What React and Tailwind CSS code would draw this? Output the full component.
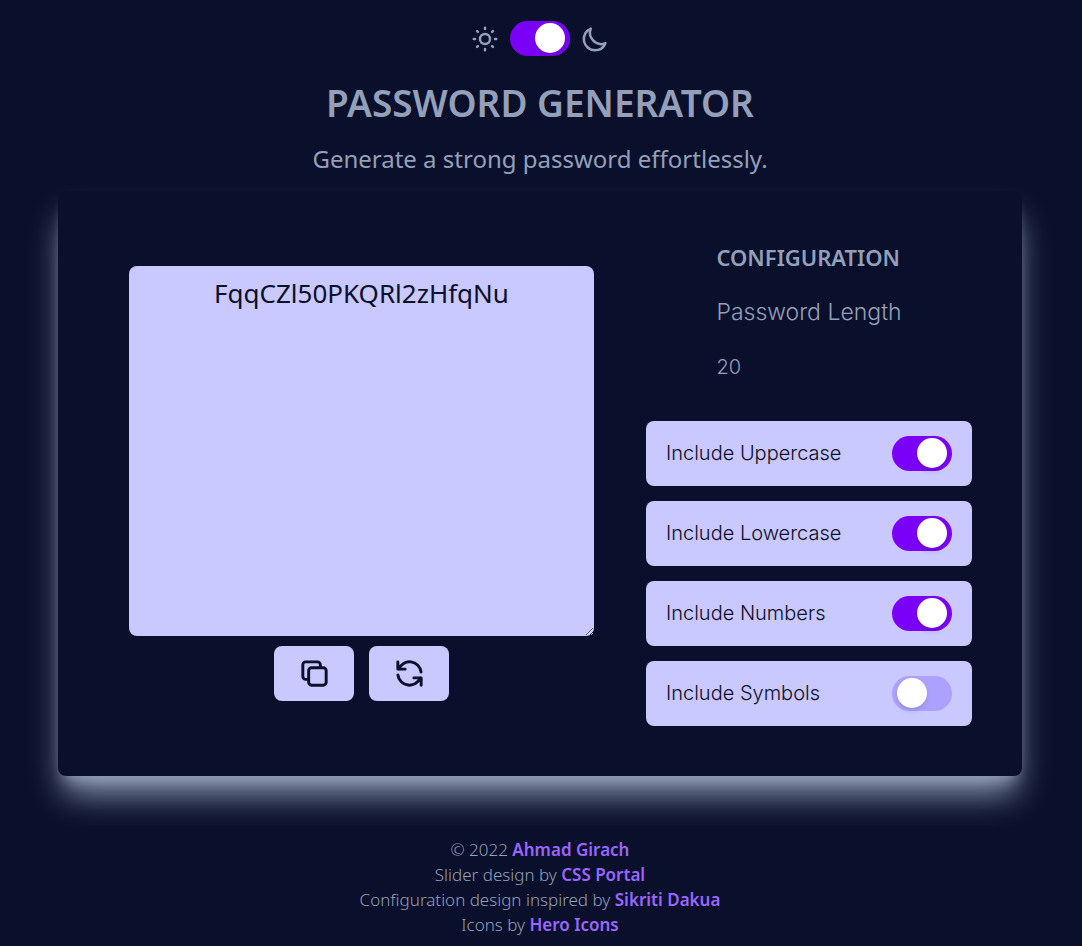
import { useState } from "react";

const SUN =
  "M12 3v1m0 16v1m9-9h-1M4 12H3m15.364 6.364l-.707-.707M6.343 6.343l-.707-.707m12.728 0l-.707.707M6.343 17.657l-.707.707M16 12a4 4 0 11-8 0 4 4 0 018 0z";
const MOON =
  "M20.354 15.354A9 9 0 018.646 3.646 9.003 9.003 0 0012 21a9.003 9.003 0 008.354-5.646z";
const COPY =
  "M8 16H6a2 2 0 01-2-2V6a2 2 0 012-2h8a2 2 0 012 2v2m-6 12h8a2 2 0 002-2v-8a2 2 0 00-2-2h-8a2 2 0 00-2 2v8a2 2 0 002 2z";
const REFRESH =
  "M4 4v5h.582m15.356 2A8.001 8.001 0 004.582 9m0 0H9m11 11v-5h-.581m0 0a8.003 8.003 0 01-15.357-2m15.357 2H15";

function Icon({ path, className, strokeWidth = 2 }) {
  return (
    <svg
      className={className}
      viewBox="0 0 24 24"
      fill="none"
      stroke="currentColor"
      strokeWidth={strokeWidth}
      strokeLinecap="round"
      strokeLinejoin="round"
      aria-hidden="true"
    >
      <path d={path} />
    </svg>
  );
}

function Toggle({ checked, onChange, ...rest }) {
  return (
    <input
      type="checkbox"
      role="switch"
      checked={checked}
      onChange={(e) => onChange(e.target.checked)}
      className="flex h-[35px] w-[60px] shrink-0 cursor-pointer appearance-none items-start rounded-full bg-[#ada1ff] px-[5px] pt-0.5 before:size-[30px] before:rounded-full before:bg-white before:shadow-md before:transition-transform before:content-[''] checked:bg-[#7b00f7] checked:before:translate-x-5"
      {...rest}
    />
  );
}

const OPTIONS = [
  { id: "uppercase", label: "Include Uppercase", on: true },
  { id: "lowercase", label: "Include Lowercase", on: true },
  { id: "numbers", label: "Include Numbers", on: true },
  { id: "symbols", label: "Include Symbols", on: false },
];

const CREDITS = [
  { text: "© 2022", name: "Ahmad Girach" },
  { text: "Slider design by", name: "CSS Portal" },
  { text: "Configuration design inspired by", name: "Sikriti Dakua" },
  { text: "Icons by", name: "Hero Icons" },
];

export default function App() {
  const [dark, setDark] = useState(true);
  const [password, setPassword] = useState("FqqCZl50PKQRl2zHfqNu");
  const [options, setOptions] = useState(
    Object.fromEntries(OPTIONS.map((o) => [o.id, o.on]))
  );

  const regenerate = () => {
    const pool =
      (options.uppercase ? "ABCDEFGHIJKLMNOPQRSTUVWXYZ" : "") +
      (options.lowercase ? "abcdefghijklmnopqrstuvwxyz" : "") +
      (options.numbers ? "0123456789" : "") +
      (options.symbols ? "!@#$%^&*()-_=+" : "");
    if (!pool) return;
    setPassword(
      Array.from({ length: 20 }, () => pool[Math.floor(Math.random() * pool.length)]).join("")
    );
  };

  return (
    <div className="flex min-h-screen flex-col items-center bg-[#0a0f2b] px-4 pt-[21px] font-['Noto_Sans',sans-serif] text-[#94a0b9] lg:pr-[60px] lg:pl-[58px]">
      <header className="flex flex-col items-center text-center">
        <div className="flex items-center gap-2.5">
          <Icon path={SUN} className="size-[30px]" />
          <Toggle checked={dark} onChange={setDark} aria-label="Dark mode" />
          <Icon path={MOON} className="size-[30px]" />
        </div>
        <h1 className="mt-6 text-[37px] leading-[45px] font-semibold">PASSWORD GENERATOR</h1>
        <p className="mt-4 text-[24px] leading-[35px] font-[370]">
          Generate a strong password effortlessly.
        </p>
      </header>

      <main className="mt-[15px] flex w-full flex-col items-center gap-[31px] rounded-lg bg-[#0a0f2b] p-[50px] shadow-[0_23px_34px_-6px_#94a0b9,0_10px_13px_-8px_#94a0b9] lg:flex-row">
        <section className="flex w-full flex-col items-center gap-2.5 lg:flex-1">
          <textarea
            aria-label="Generated password"
            spellCheck={false}
            value={password}
            onChange={(e) => setPassword(e.target.value)}
            className="block h-[370px] w-11/12 rounded-lg bg-[#c9c8ff] p-2.5 text-center text-[26px] leading-[35px] font-[370] text-[#0a0f2b] outline-none"
          />
          <div className="flex gap-[15px]">
            <button
              type="button"
              aria-label="Copy password"
              onClick={() => navigator.clipboard?.writeText(password)}
              className="flex h-[55px] w-20 items-center justify-center rounded-lg bg-[#c9c8ff] text-[#0a0f2b]"
            >
              <Icon path={COPY} className="size-[35px]" />
            </button>
            <button
              type="button"
              aria-label="Generate new password"
              onClick={regenerate}
              className="flex h-[55px] w-20 items-center justify-center rounded-lg bg-[#c9c8ff] text-[#0a0f2b]"
            >
              <Icon path={REFRESH} className="size-[35px]" />
            </button>
          </div>
        </section>

        <section className="flex w-full flex-col items-center font-['Inter',sans-serif] lg:w-[326px]">
          <div className="flex flex-col gap-[21px] pb-[37px]">
            <h2 className="font-['Noto_Sans',sans-serif] text-[22px] leading-[33px] font-semibold">
              CONFIGURATION
            </h2>
            <p className="text-[23px] leading-[35px] font-[350]">Password Length</p>
            <p className="text-[20px] leading-[33px] font-[350]">20</p>
          </div>
          <div className="flex w-full flex-col gap-[15px]">
            {OPTIONS.map((o) => (
              <div
                key={o.id}
                className="flex h-[65px] items-center justify-between rounded-lg bg-[#c9c8ff] px-5"
              >
                <label htmlFor={o.id} className="text-[20px] leading-[33px] font-[350] text-[#0a0f2b]">
                  {o.label}
                </label>
                <Toggle
                  id={o.id}
                  checked={options[o.id]}
                  onChange={(v) => setOptions({ ...options, [o.id]: v })}
                />
              </div>
            ))}
          </div>
        </section>
      </main>

      <footer className="mt-[61px] pb-2 text-center text-[17px] leading-[25px] font-[350]">
        {CREDITS.map((c) => (
          <p key={c.name}>
            {c.text}{" "}
            <a href="#" className="font-semibold text-[#9b66ff]">
              {c.name}
            </a>
          </p>
        ))}
      </footer>
    </div>
  );
}
